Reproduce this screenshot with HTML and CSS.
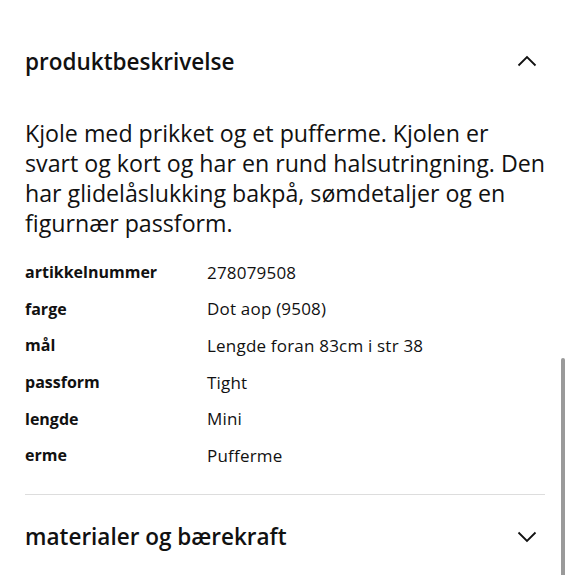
FILE: index.html
```html
<!DOCTYPE html>
<html lang="no">
<head>
<meta charset="utf-8">
<link rel="stylesheet" href="styles.css">
</head>
<body>
<div class="page">
  <section class="acc open">
    <div class="acc-head">
      <h2 class="acc-title">produktbeskrivelse</h2>
      <svg class="chev" width="20" height="12" viewBox="0 0 20 12"><path d="M1.5 10.5 L10 2 L18.5 10.5" fill="none" stroke="#111" stroke-width="1.8"/></svg>
    </div>
    <p class="desc">Kjole med prikket og et pufferme. Kjolen er<br>svart og kort og har en rund halsutringning. Den<br>har glidelåslukking bakpå, sømdetaljer og en<br>figurnær passform.</p>
    <dl class="specs">
      <div class="row"><dt>artikkelnummer</dt><dd>278079508</dd></div>
      <div class="row"><dt>farge</dt><dd>Dot aop (9508)</dd></div>
      <div class="row"><dt>mål</dt><dd>Lengde foran 83cm i str 38</dd></div>
      <div class="row"><dt>passform</dt><dd>Tight</dd></div>
      <div class="row"><dt>lengde</dt><dd>Mini</dd></div>
      <div class="row"><dt>erme</dt><dd>Pufferme</dd></div>
    </dl>
  </section>
  <section class="acc">
    <div class="acc-head">
      <h2 class="acc-title">materialer og bærekraft</h2>
      <svg class="chev" width="20" height="12" viewBox="0 0 20 12"><path d="M1.5 1.5 L10 10 L18.5 1.5" fill="none" stroke="#111" stroke-width="1.8"/></svg>
    </div>
  </section>
</div>
<div class="scrollbar"></div>
</body>
</html>
```
FILE: styles.css
```css
html, body { margin: 0; padding: 0; background: #fff; }
body {
  font-family: "Open Sans", "Noto Sans", sans-serif;
  color: #111;
  width: 570px;
  height: 575px;
  overflow: hidden;
  position: relative;
}
.page { padding: 0 25px 0 25px; width: 520px; }
.acc-head {
  display: flex;
  align-items: center;
  justify-content: space-between;
  padding-right: 8px;
}
.acc.open .acc-head { padding-top: 46px; padding-bottom: 0; height: 30px; }
.acc-title { margin: 0; font-size: 22.5px; font-weight: 600; letter-spacing: 0; }
.desc {
  margin: 42px -25px 0 0;
  font-size: 23.2px;
  line-height: 30px;
  font-weight: 400;
  white-space: nowrap;
}
.specs { margin: 16px 0 0 0; padding-bottom: 20px; border-bottom: 1px solid #ddd; }
.row { display: flex; height: 36.6px; align-items: center; font-size: 16px; }
.row dt { width: 182px; font-weight: 700; }
.row dd { margin: 0; font-size: 17px; letter-spacing: 0.2px; }
.acc:not(.open) .acc-head { height: 84px; }
.scrollbar {
  position: absolute;
  left: 561px;
  top: 358px;
  width: 4px;
  height: 230px;
  background: #9a9a9a;
  border-radius: 2px;
}
```
